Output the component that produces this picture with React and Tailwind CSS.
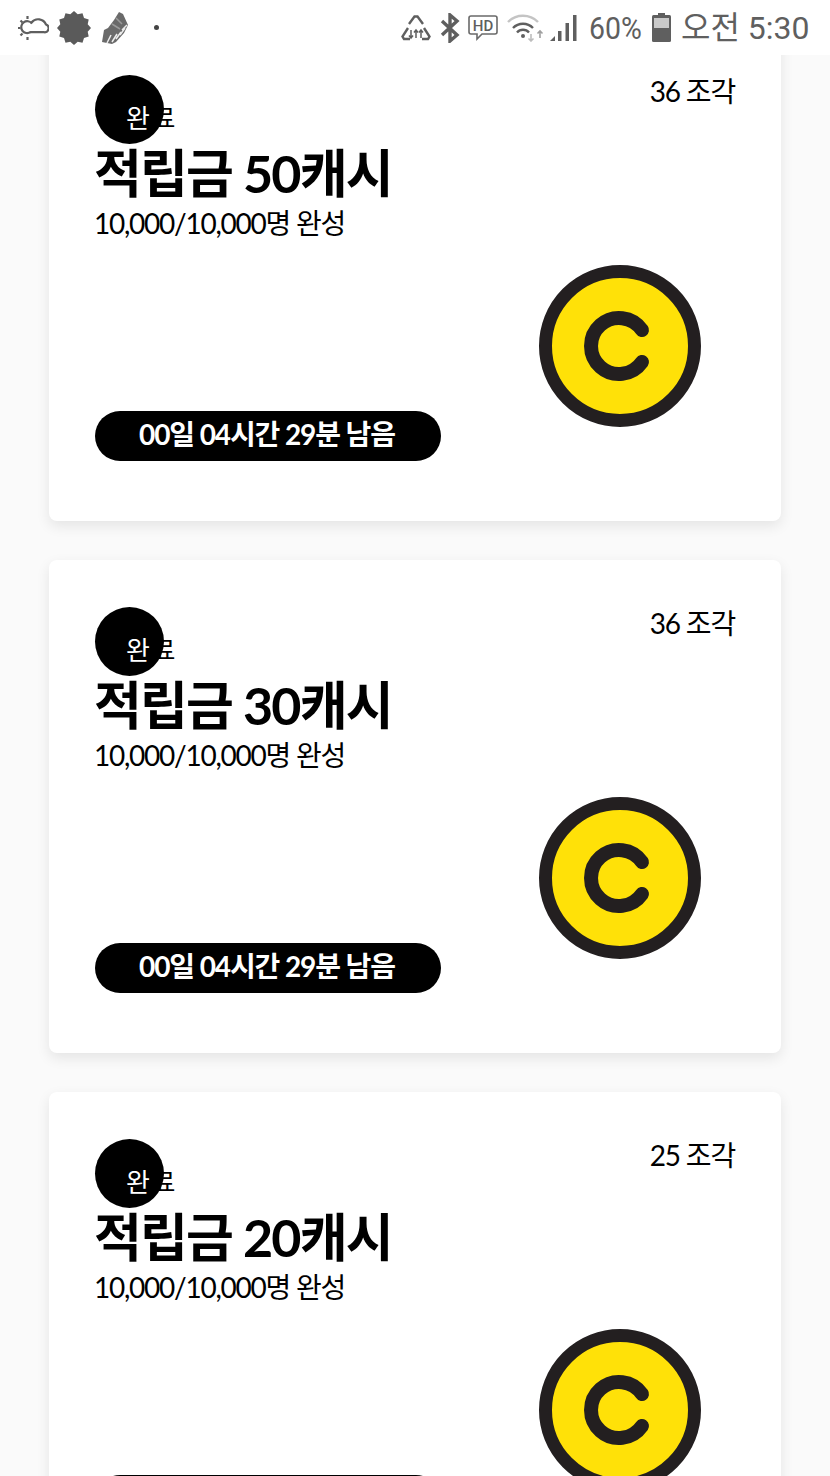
import React from "react";

const burstPoints = Array.from({ length: 24 }, (_, i) => {
  const r = i % 2 === 0 ? 17 : 14.2;
  const a = (i * Math.PI) / 12;
  return `${(17 + r * Math.cos(a)).toFixed(1)},${(17 + r * Math.sin(a)).toFixed(1)}`;
}).join(" ");

function WeatherIcon() {
  return (
    <svg width="32" height="26" viewBox="0 0 32 26" fill="none" stroke="#5f5f5f" strokeWidth="2.200">
      <path d="M14.500 7.500A8.500 8.500 0 0 1 29 9.500a4 4 0 0 1-2 7.700H13.500" strokeLinecap="round" />
      <path d="M15 8.500A6 6 0 1 0 13.500 17.200" />
      <path d="M10.500 1v3M10.500 22v3M1 13h2.500M3.500 5.500l2 2M3.500 20.500l2-2" />
    </svg>
  );
}

function BurstIcon() {
  return (
    <svg width="34" height="34" viewBox="0 0 34 34">
      <polygon points={burstPoints} fill="#5a5a5a" />
    </svg>
  );
}

function ShoeIcon() {
  return (
    <svg width="26" height="32" viewBox="0 0 26 32">
      <path d="M17 0l4 2 5 11-4 8-8 9-4 2-10-2 2-12 4-2 6-8z" fill="#6a6a6a" />
      <path d="M5 31l4-8M10 30l5-8M14 27l5-7M18 23l5-7M20 18l5-5" stroke="#ececec" strokeWidth="1.500" fill="none" />
      <path d="M10 12l8 5M14 6l6 6" stroke="#9a9a9a" strokeWidth="1.500" fill="none" />
    </svg>
  );
}

function RecycleIcon() {
  return (
    <svg width="30" height="28" viewBox="0 0 30 28" fill="none" stroke="#5f5f5f" strokeWidth="2.400">
      <path d="M8 10l5.500-7.500h3L22 10M7 14L1.500 22.500 3 25h6M23 14l5.500 8.500L27 25h-6" />
      <path d="M10 16v8m-2-2.500l2 2.500 2-2.500M15 24v-8m-2 2.500l2-2.500 2 2.500M20 24v-8m-2 2.500l2-2.500 2 2.500" strokeWidth="1.500" />
    </svg>
  );
}

function BluetoothIcon() {
  return (
    <svg width="20" height="30" viewBox="0 0 20 30" fill="none" stroke="#5f5f5f" strokeWidth="3.400">
      <path d="M2 8l15 14-7 6V2l7 6L2 22" />
    </svg>
  );
}

function HdIcon() {
  return (
    <svg width="30" height="26" viewBox="0 0 30 26" fill="none">
      <path d="M3 1h24a2 2 0 0 1 2 2v14a2 2 0 0 1-2 2H14l-5 5v-5H3a2 2 0 0 1-2-2V3a2 2 0 0 1 2-2z" stroke="#6a6a6a" strokeWidth="1.600" />
      <text x="15" y="15.500" textAnchor="middle" fontFamily="Roboto, sans-serif" fontSize="15" fontWeight="500" fill="#5f5f5f">HD</text>
    </svg>
  );
}

function WifiIcon() {
  return (
    <svg width="37" height="28" viewBox="0 0 37 28" fill="none" strokeWidth="2.400">
      <path d="M1 8a21 21 0 0 1 30 0" stroke="#c4c4c4" />
      <path d="M6 14a14 14 0 0 1 20 0M10 18.500a8 8 0 0 1 12 0" stroke="#5f5f5f" />
      <circle cx="16" cy="22" r="2" fill="#5f5f5f" />
      <path d="M24 20v7m-2.500-2.500l2.500 2.500 2.500-2.500" stroke="#bdbdbd" strokeWidth="1.600" />
      <path d="M33 24v-7m-2.500 2.500l2.500-2.500 2.500 2.500" stroke="#a0a0a0" strokeWidth="1.600" />
    </svg>
  );
}

function SignalIcon() {
  return (
    <svg width="28" height="28" viewBox="0 0 28 28" fill="#5f5f5f">
      <path d="M1 27l5-5v5z" />
      <rect x="9" y="17" width="3.500" height="10" />
      <rect x="16.500" y="9" width="3.500" height="18" />
      <rect x="24" y="1" width="3.500" height="26" />
    </svg>
  );
}

function BatteryIcon() {
  return (
    <svg width="19" height="29" viewBox="0 0 19 29">
      <rect x="6" y="0" width="7" height="3" fill="#5f5f5f" />
      <rect x="0" y="2" width="19" height="27" rx="1.500" fill="#5f5f5f" />
      <rect x="2" y="5" width="15" height="10" fill="#c9c9c9" />
    </svg>
  );
}

function CoinIcon() {
  return (
    <svg width="162" height="162" viewBox="0 0 162 162" className="shrink-0 block">
      <circle cx="81" cy="81" r="74.500" fill="#ffe108" stroke="#231f20" strokeWidth="13" />
      <path d="M103 65A28 28 0 1 0 103 97" fill="none" stroke="#231f20" strokeWidth="14" strokeLinecap="round" />
    </svg>
  );
}

function RewardCard({ pieces, amount }) {
  return (
    <div className="w-[732px] h-[493px] shrink-0 bg-white rounded-lg shadow-[0_5px_14px_rgba(0,0,0,0.09)] pt-[47px] px-[46px]">
      <div className="flex justify-between items-start">
        <div>
          <div className="relative w-[69px] h-[69px] rounded-full bg-black">
            <span className="absolute left-[31px] top-[26px] whitespace-nowrap text-[26px] leading-[34px] tracking-[1.500px]">
              <span className="text-white">완</span>
              <span className="text-black">료</span>
            </span>
          </div>
          <div className="-ml-[1px] text-[52px] leading-[58px] font-bold tracking-[-1.8px] text-black whitespace-nowrap">
            적립금 {amount}캐시
          </div>
          <div className="mt-[3px] -ml-[1px] text-[28px] leading-[36px] tracking-[-1.250px] text-black whitespace-nowrap">
            10,000/10,000명 완성
          </div>
        </div>
        <div className="text-[28px] leading-[36px] tracking-[-1.200px] text-black whitespace-nowrap -mt-[2px]">
          {pieces} 조각
        </div>
      </div>
      <div className="flex justify-between items-start mt-[24px] pr-[34px]">
        <div className="mt-[146px] w-[346px] h-[50px] pr-[2px] rounded-full bg-black text-white text-[28px] leading-[47px] font-bold tracking-[-1.100px] text-center whitespace-nowrap">
          00일 04시간 29분 남음
        </div>
        <CoinIcon />
      </div>
    </div>
  );
}

export default function App() {
  return (
    <div className="relative w-[830px] h-[1476px] overflow-hidden bg-[#fafafa] font-['Lato','Noto_Sans_CJK_KR',sans-serif]">
      <div className="absolute top-0 left-0 right-0 z-10 h-[55px] bg-white flex items-center justify-between pl-[17px] pr-[22px]">
        <div className="flex items-center">
          <WeatherIcon />
          <div className="ml-[8px]">
            <BurstIcon />
          </div>
          <div className="ml-[11px]">
            <ShoeIcon />
          </div>
          <div className="ml-[26px] w-[5px] h-[5px] rounded-full bg-[#444]" />
        </div>
        <div className="flex items-center">
          <RecycleIcon />
          <div className="ml-[9px]">
            <BluetoothIcon />
          </div>
          <div className="ml-[8px]">
            <HdIcon />
          </div>
          <div className="ml-[9px]">
            <WifiIcon />
          </div>
          <div className="ml-[5px]">
            <SignalIcon />
          </div>
          <span className="ml-[12px] w-[54px] text-[32px] leading-[40px] font-['Roboto','Noto_Sans_CJK_KR',sans-serif] text-[#5f5f5f] whitespace-nowrap scale-x-[0.89] origin-left">
            60%
          </span>
          <div className="ml-[9px]">
            <BatteryIcon />
          </div>
          <span className="ml-[10px] w-[127px] text-[32px] leading-[40px] font-['Roboto','Noto_Sans_CJK_KR',sans-serif] text-[#5f5f5f] whitespace-nowrap">
            오전 5:30
          </span>
        </div>
      </div>
      <div className="flex flex-col gap-[39px] pt-[28px] pl-[49px]">
        <RewardCard pieces={36} amount={50} />
        <RewardCard pieces={36} amount={30} />
        <RewardCard pieces={25} amount={20} />
      </div>
    </div>
  );
}
